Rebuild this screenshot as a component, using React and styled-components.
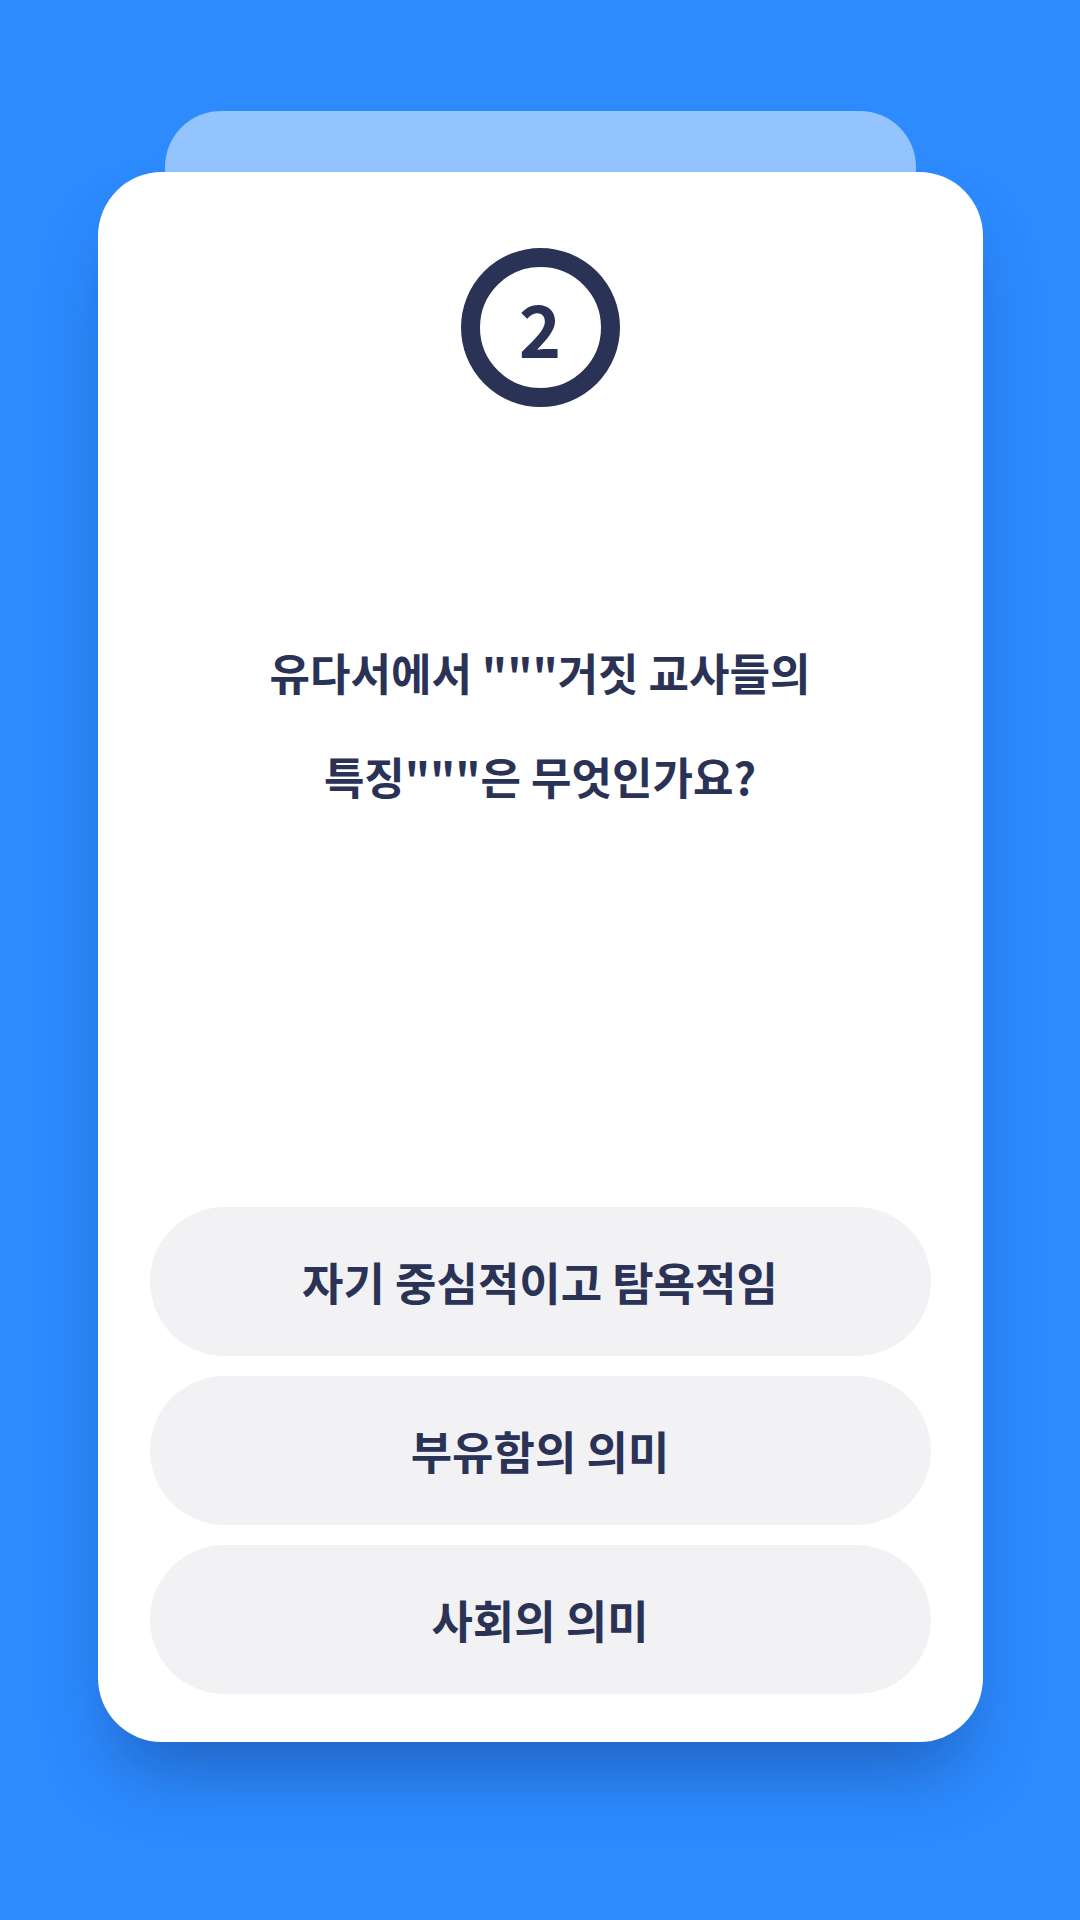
import styled, { createGlobalStyle } from 'styled-components';

const GlobalStyle = createGlobalStyle`
  html, body {
    margin: 0;
    padding: 0;
    background: #2d8bfe;
  }

  body {
    font-family: "Noto Sans CJK KR", "Noto Sans", sans-serif;
  }
`;

const Page = styled.main`
  min-height: 1920px;
  width: 1080px;
  display: flex;
  flex-direction: column;
  align-items: center;
  padding-top: 111px;
  box-sizing: border-box;
  background: #2d8bfe;
`;

const BackCard = styled.div`
  width: 751px;
  height: 61px;
  margin-left: 1px;
  background: #93c4fd;
  border-radius: 56px 56px 0 0;
`;

const Card = styled.section`
  width: 885px;
  height: 1570px;
  box-sizing: border-box;
  padding: 76px 52px 48px;
  display: flex;
  flex-direction: column;
  align-items: center;
  background: #ffffff;
  border-radius: 64px;
  box-shadow: 0 44px 70px -18px rgba(16, 48, 120, 0.45);
`;

const NumberBadge = styled.div`
  width: 159px;
  height: 159px;
  box-sizing: border-box;
  border: 19px solid #2a3355;
  border-radius: 50%;
  display: flex;
  align-items: center;
  justify-content: center;
  color: #2a3355;
  font-size: 72px;
  font-weight: 700;
  line-height: 1;
  padding-bottom: 2px;
`;

const Question = styled.h2`
  margin: 213px 0 0;
  max-width: 640px;
  text-align: center;
  color: #2a3355;
  font-size: 44px;
  font-weight: 700;
  line-height: 104px;
`;

const Answers = styled.div`
  margin-top: auto;
  width: 100%;
  display: flex;
  flex-direction: column;
  gap: 20px;
`;

const Answer = styled.button`
  height: 149px;
  width: 100%;
  border: none;
  border-radius: 75px;
  background: #f2f2f5;
  color: #2a3355;
  font-family: "Noto Sans CJK KR", "Noto Sans", sans-serif;
  font-size: 45px;
  font-weight: 700;
  cursor: pointer;
`;

const answers = ['자기 중심적이고 탐욕적임', '부유함의 의미', '사회의 의미'];

export default function App() {
  return (
    <>
      <GlobalStyle />
      <Page>
        <BackCard />
        <Card>
          <NumberBadge>2</NumberBadge>
          <Question>
            {'유다서에서 """거짓 교사들의'}
            <br />
            {'특징"""은 무엇인가요?'}
          </Question>
          <Answers>
            {answers.map((a) => (
              <Answer key={a}>{a}</Answer>
            ))}
          </Answers>
        </Card>
      </Page>
    </>
  );
}
